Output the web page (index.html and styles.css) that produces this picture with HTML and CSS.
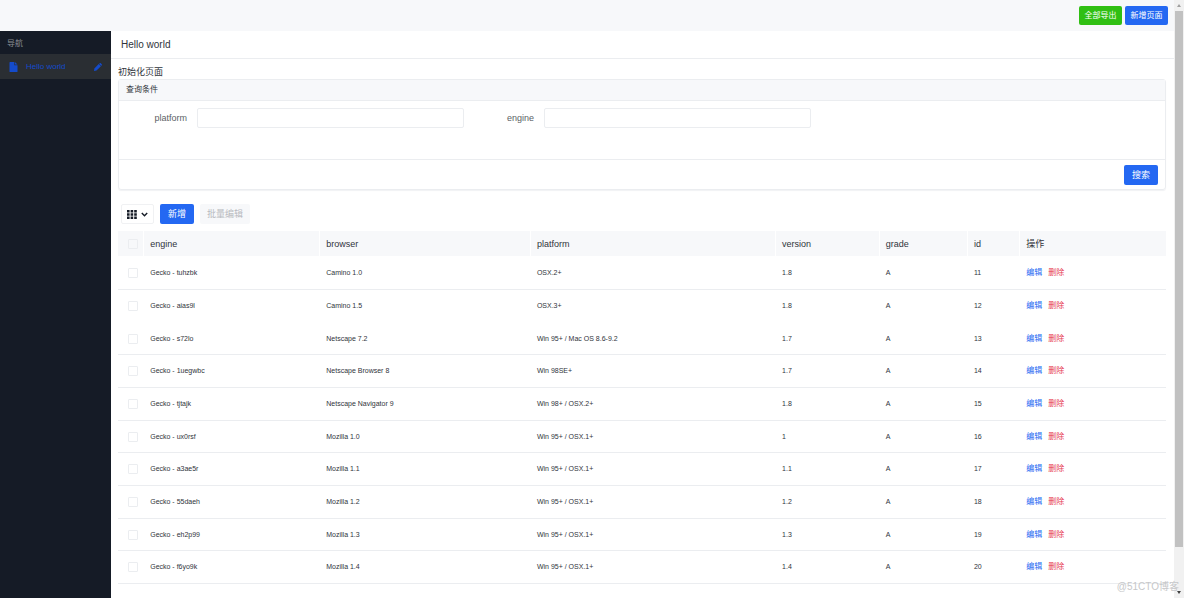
FILE: index.html
```html
<!DOCTYPE html>
<html lang="zh-CN">
<head>
<meta charset="utf-8">
<title>Hello world</title>
<link rel="stylesheet" href="styles.css">
</head>
<body>
<div class="viewport">
  <div class="app">
    <header class="topbar">
      <button class="btn btn-small btn-success" type="button">全部导出</button>
      <button class="btn btn-small btn-primary" type="button">新增页面</button>
    </header>
    <div class="layout">
      <nav class="sidebar">
        <div class="nav-label">导航</div>
        <div class="nav-item">
          <svg class="icon-file" viewBox="0 0 8 10" aria-hidden="true"><path d="M.6 0H4.8V3.2H8V9.4Q8 10 7.4 10H.6Q0 10 0 9.4V.6Q0 0 .6 0Z"/><path d="M5.4 0L8 2.6H5.4Z"/></svg>
          <a class="nav-link" href="#">Hello world</a>
          <button class="icon-btn" type="button" aria-label="编辑页面">
            <svg class="icon-pencil" viewBox="0 0 8 8" aria-hidden="true"><path d="M4.7 1.1L6.9 3.3L2.5 7.6L0 8L.4 5.5Z"/><path d="M5.1.8L5.7.3Q6.3-.2 6.8.3L7.7 1.2Q8.2 1.7 7.7 2.3L7.2 2.9Z"/></svg>
          </button>
        </div>
      </nav>
      <main class="content">
        <h1 class="page-title">Hello world</h1>
        <div class="page-body">
          <div class="intro">初始化页面</div>
          <form class="panel">
            <h2 class="panel-head">查询条件</h2>
            <div class="panel-fields">
              <div class="field"><label for="f-platform">platform</label><input id="f-platform" type="text"></div>
              <div class="field"><label for="f-engine">engine</label><input id="f-engine" type="text"></div>
            </div>
            <div class="panel-foot"><button class="btn btn-primary" type="button">搜索</button></div>
          </form>
          <div class="toolbar">
            <button class="btn btn-columns" type="button" aria-label="显示列">
              <svg class="icon-grid" viewBox="0 0 10 9" aria-hidden="true"><path d="M0 0h2.6v2.4H0zM3.6 0h2.6v2.4H3.6zM7.2 0h2.6v2.4H7.2zM0 3.3h2.6v2.4H0zM3.6 3.3h2.6v2.4H3.6zM7.2 3.3h2.6v2.4H7.2zM0 6.6h2.6V9H0zM3.6 6.6h2.6V9H3.6zM7.2 6.6h2.6V9H7.2z"/></svg>
              <svg class="icon-chevron" viewBox="0 0 7 5" aria-hidden="true"><path d="M.8.9L3.5 3.7L6.2.9"/></svg>
            </button>
            <button class="btn btn-primary" type="button">新增</button>
            <button class="btn btn-disabled" type="button" disabled>批量编辑</button>
          </div>
          <table class="grid">
            <colgroup><col class="c-check"><col class="c-engine"><col class="c-browser"><col class="c-platform"><col class="c-version"><col class="c-grade"><col class="c-id"><col class="c-action"></colgroup>
            <thead><tr><th><input type="checkbox" aria-label="全选"></th><th>engine</th><th>browser</th><th>platform</th><th>version</th><th>grade</th><th>id</th><th>操作</th></tr></thead>
            <tbody>
              <tr><td><input type="checkbox" aria-label="11"></td><td>Gecko - tuhzbk</td><td>Camino 1.0</td><td>OSX.2+</td><td>1.8</td><td>A</td><td>11</td><td><a class="edit" href="#">编辑</a><a class="delete" href="#">删除</a></td></tr>
              <tr class="joined"><td><input type="checkbox" aria-label="12"></td><td>Gecko - aias9l</td><td>Camino 1.5</td><td>OSX.3+</td><td>1.8</td><td>A</td><td>12</td><td><a class="edit" href="#">编辑</a><a class="delete" href="#">删除</a></td></tr>
              <tr><td><input type="checkbox" aria-label="13"></td><td>Gecko - s72lo</td><td>Netscape 7.2</td><td>Win 95+ / Mac OS 8.6-9.2</td><td>1.7</td><td>A</td><td>13</td><td><a class="edit" href="#">编辑</a><a class="delete" href="#">删除</a></td></tr>
              <tr><td><input type="checkbox" aria-label="14"></td><td>Gecko - 1uegwbc</td><td>Netscape Browser 8</td><td>Win 98SE+</td><td>1.7</td><td>A</td><td>14</td><td><a class="edit" href="#">编辑</a><a class="delete" href="#">删除</a></td></tr>
              <tr><td><input type="checkbox" aria-label="15"></td><td>Gecko - tjtajk</td><td>Netscape Navigator 9</td><td>Win 98+ / OSX.2+</td><td>1.8</td><td>A</td><td>15</td><td><a class="edit" href="#">编辑</a><a class="delete" href="#">删除</a></td></tr>
              <tr><td><input type="checkbox" aria-label="16"></td><td>Gecko - ux0rsf</td><td>Mozilla 1.0</td><td>Win 95+ / OSX.1+</td><td>1</td><td>A</td><td>16</td><td><a class="edit" href="#">编辑</a><a class="delete" href="#">删除</a></td></tr>
              <tr><td><input type="checkbox" aria-label="17"></td><td>Gecko - a3ae5r</td><td>Mozilla 1.1</td><td>Win 95+ / OSX.1+</td><td>1.1</td><td>A</td><td>17</td><td><a class="edit" href="#">编辑</a><a class="delete" href="#">删除</a></td></tr>
              <tr><td><input type="checkbox" aria-label="18"></td><td>Gecko - 55daeh</td><td>Mozilla 1.2</td><td>Win 95+ / OSX.1+</td><td>1.2</td><td>A</td><td>18</td><td><a class="edit" href="#">编辑</a><a class="delete" href="#">删除</a></td></tr>
              <tr><td><input type="checkbox" aria-label="19"></td><td>Gecko - eh2p99</td><td>Mozilla 1.3</td><td>Win 95+ / OSX.1+</td><td>1.3</td><td>A</td><td>19</td><td><a class="edit" href="#">编辑</a><a class="delete" href="#">删除</a></td></tr>
              <tr><td><input type="checkbox" aria-label="20"></td><td>Gecko - f6yo9k</td><td>Mozilla 1.4</td><td>Win 95+ / OSX.1+</td><td>1.4</td><td>A</td><td>20</td><td><a class="edit" href="#">编辑</a><a class="delete" href="#">删除</a></td></tr>
            </tbody>
          </table>
        </div>
      </main>
    </div>
  </div>
  <div class="scrollbar" aria-hidden="true">
    <svg class="arrow arrow-up" viewBox="0 0 4 3"><path d="M0 3L2 0L4 3Z"/></svg>
    <div class="track"><div class="thumb"></div></div>
    <svg class="arrow" viewBox="0 0 4 3"><path d="M0 0L2 3L4 0Z"/></svg>
  </div>
  <div class="watermark">@51CTO博客</div>
</div>
</body>
</html>
```
FILE: styles.css
```css
* {
  box-sizing: border-box;
}

body {
  margin: 0;
  background: #fff;
  color: #30343b;
  font-family: "Liberation Sans", "Noto Sans CJK SC", sans-serif;
  font-size: 9px;
  line-height: 14px;
}

button,
input {
  font: inherit;
  color: inherit;
}

a {
  text-decoration: none;
}

.viewport {
  position: relative;
  display: flex;
  min-height: 100vh;
}

.app {
  flex: 1;
  min-width: 0;
  display: flex;
  flex-direction: column;
}

/* top bar */
.topbar {
  display: flex;
  justify-content: flex-end;
  align-items: center;
  gap: 3px;
  height: 31px;
  padding-right: 6px;
  background: #f7f8fa;
}

.btn {
  display: flex;
  align-items: center;
  justify-content: center;
  height: 20px;
  padding: 0 8px;
  border: 0;
  border-radius: 2px;
  color: #fff;
  white-space: nowrap;
}

.btn-small {
  height: 19px;
  width: 43px;
  padding: 0;
  font-size: 8px;
}

.btn-primary {
  background: #2468f2;
}

.btn-success {
  background: #30bf13;
}

.btn-disabled {
  padding: 0 7px;
  background: #f7f8fa;
  color: #b8babf;
}

/* navigation */
.layout {
  flex: 1;
  display: flex;
}

.sidebar {
  flex: 0 0 111px;
  background: #151b26;
}

.nav-label {
  height: 23px;
  padding: 0 7px;
  color: #8a8d92;
  font-size: 8px;
  line-height: 25px;
}

.nav-item {
  display: flex;
  align-items: center;
  height: 25px;
  padding: 0 9px;
  background: #2a2e33;
  color: #144bcb;
}

.nav-item svg {
  display: block;
  fill: currentColor;
}

.icon-file {
  width: 9px;
  height: 10px;
}

.nav-link {
  flex: 1;
  margin-left: 8px;
  color: inherit;
  font-size: 8px;
}

.icon-btn {
  padding: 0;
  border: 0;
  background: none;
}

.icon-pencil {
  width: 8px;
  height: 8px;
}

/* page */
.content {
  flex: 1;
  min-width: 0;
}

.page-title {
  height: 28px;
  margin: 0;
  padding-left: 10px;
  border-bottom: 1px solid #ebedf0;
  font-size: 10px;
  font-weight: 400;
  line-height: 27px;
}

.page-body {
  padding: 6px 8px 14px 7px;
}

.panel {
  border: 1px solid #ebedf0;
  border-radius: 3px;
  box-shadow: 0 1px 1px #f1f2f4;
}

.panel-head {
  height: 21px;
  margin: 0;
  padding-left: 7px;
  border-bottom: 1px solid #ebedf0;
  background: #f7f8fa;
  font-size: 8px;
  font-weight: 400;
  line-height: 20px;
}

.panel-fields {
  display: grid;
  grid-template-columns: repeat(3, 1fr);
  height: 58px;
  padding: 7px 3px 0 2px;
}

.field {
  display: flex;
  gap: 10px;
  height: 20px;
  padding-right: 4px;
  color: #5c5f66;
  line-height: 20px;
}

.field label {
  flex: 0 0 66px;
  text-align: right;
}

.field input {
  flex: 1;
  min-width: 0;
  border: 1px solid #ebedf0;
  border-radius: 2px;
  background: #fff;
}

.panel-foot {
  display: flex;
  justify-content: flex-end;
  align-items: center;
  height: 30px;
  padding-right: 7px;
  border-top: 1px solid #ebedf0;
}

.toolbar {
  display: flex;
  gap: 6px;
  padding: 14px 0 7px 3px;
}

.btn-columns {
  width: 33px;
  gap: 4px;
  padding: 0;
  border: 1px solid #f0f1f3;
  background: #fff;
}

.icon-grid {
  width: 10px;
  height: 9px;
  fill: #151b26;
}

.icon-chevron {
  width: 7px;
  height: 5px;
  fill: none;
  stroke: #151b26;
  stroke-width: 1.4;
}

/* data table */
.grid {
  width: 100%;
  table-layout: fixed;
  border-collapse: separate;
  border-spacing: 0;
}

.c-check { width: 2.5%; }
.c-engine { width: 16.8%; }
.c-browser { width: 20.1%; }
.c-platform { width: 23.4%; }
.c-version { width: 9.9%; }
.c-grade { width: 8.4%; }
.c-id { width: 5%; }
.c-action { width: 13.9%; }

.grid th,
.grid td {
  padding: 0 0 0 6px;
  text-align: left;
  font-weight: 400;
  white-space: nowrap;
}

.grid th {
  height: 26px;
  border-right: 1px solid #fff;
  border-bottom: 1px solid #fff;
  background: #f7f8fa;
}

.grid th:last-child {
  border-right: 0;
}

.grid td {
  height: 33px;
  border-bottom: 1px solid #ebedf0;
  font-size: 7px;
}

.grid tr:nth-child(3n) td {
  height: 32px;
}

.grid .joined td {
  border-bottom-color: transparent;
}

.grid th:first-child,
.grid td:first-child {
  padding-left: 10px;
}

.grid input {
  appearance: none;
  display: block;
  width: 10px;
  height: 10px;
  margin: 0;
  border: 1px solid #ebedf0;
  border-radius: 1px;
}

.grid a {
  margin-right: 6px;
  font-size: 8px;
}

.edit {
  color: #2468f2;
}

.delete {
  color: #e63950;
}

/* scroll bar */
.scrollbar {
  flex: 0 0 10px;
  display: flex;
  flex-direction: column;
  align-items: center;
  gap: 4px;
  padding: 4px 1px;
  background: #f1f1f1;
}

.track {
  flex: 1;
  align-self: stretch;
}

.thumb {
  height: 93%;
  background: #c1c1c1;
}

.arrow {
  display: block;
  width: 4px;
  height: 3px;
  fill: #404040;
}

.arrow-up {
  fill: #a0a0a0;
}

.watermark {
  position: absolute;
  right: 5px;
  bottom: 4px;
  color: #c6c7c9;
  font-size: 10px;
}
```
